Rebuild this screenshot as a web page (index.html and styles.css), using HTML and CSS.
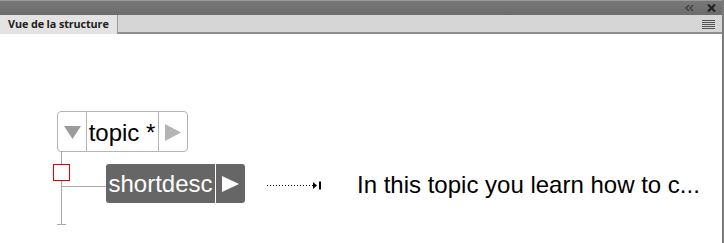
FILE: index.html
```html
<!DOCTYPE html>
<html>
<head>
<meta charset="utf-8">
<link rel="stylesheet" href="styles.css">
</head>
<body>
<div class="panel">
  <div class="titlebar">
    <span class="tb-collapse">
      <svg width="9" height="6" viewBox="0 0 9 6"><path d="M4 0 L1 3 L4 6 M8 0 L5 3 L8 6" fill="none" stroke="#3a3a3a" stroke-width="1.3"/></svg>
    </span>
    <span class="tb-close">
      <svg width="9" height="8" viewBox="0 0 9 8"><path d="M1 0.5 L8 7.5 M8 0.5 L1 7.5" stroke="#222" stroke-width="2.2"/></svg>
    </span>
  </div>
  <div class="tabbar">
    <div class="tab">Vue de la structure</div>
    <div class="tab-spacer"></div>
    <div class="menu-icon">
      <svg width="13" height="9" viewBox="0 0 13 9"><path d="M0 0.5H13M0 2.5H13M0 4.5H13M0 6.5H13M0 8.5H13" stroke="#555" stroke-width="1"/></svg>
    </div>
  </div>
  <div class="content">
    <div class="diagram">
      <div class="node topic">
        <div class="cell arrow-cell">
          <svg width="17" height="13" viewBox="0 0 17 13"><path d="M0 0H17L8.5 13Z" fill="#9c9c9c"/></svg>
        </div>
        <div class="cell label">topic *</div>
        <div class="cell arrow-cell right">
          <svg width="16" height="17" viewBox="0 0 16 17"><path d="M0 0L16 8.5L0 17Z" fill="#b4b4b4"/></svg>
        </div>
      </div>
      <div class="row">
        <div class="connector">
          <div class="vline"></div>
          <div class="tick"></div>
          <div class="hline"></div>
          <div class="redbox"></div>
        </div>
        <div class="node shortdesc">
          <div class="cell label">shortdesc</div>
          <div class="cell arrow-cell">
            <svg width="17" height="16" viewBox="0 0 17 16"><path d="M0 0L17 8L0 16Z" fill="#ffffff"/></svg>
          </div>
        </div>
        <div class="link">
          <svg width="54" height="9" viewBox="0 0 54 9"><path d="M0 4.5H46" stroke="#000" stroke-width="1" stroke-dasharray="1 2"/><path d="M46 1L50 4.5L46 8Z" fill="#000"/><rect x="52" y="0.5" width="2" height="8" fill="#000"/></svg>
        </div>
        <div class="desc">In this topic you learn how to c...</div>
      </div>
    </div>
  </div>
</div>
</body>
</html>
```
FILE: styles.css
```css
html, body {
  margin: 0;
  padding: 0;
  background: #ffffff;
}
.panel {
  width: 722px;
  height: 243px;
  border-right: 2px solid #7a7a7a;
  display: flex;
  flex-direction: column;
  font-family: "Liberation Sans", Arial, sans-serif;
}
.titlebar {
  height: 14px;
  border-top: 1px solid #9a9a9a;
  background: linear-gradient(#777777, #6c6c6c);
  display: flex;
  justify-content: flex-end;
  align-items: center;
  padding-right: 6px;
}
.tb-collapse {
  display: flex;
  margin-right: 13px;
}
.tb-close {
  display: flex;
}
.tabbar {
  height: 17px;
  background: #d6d6d6;
  border-bottom: 2px solid #8e8e8e;
  display: flex;
  align-items: stretch;
}
.tab {
  width: 109px;
  padding-left: 8px;
  background: #e3e3e3;
  border-right: 1px solid #9a9a9a;
  margin-bottom: -2px;
  font-family: "Open Sans", "DejaVu Sans", sans-serif;
  font-weight: bold;
  font-size: 10.8px;
  line-height: 18px;
  color: #222222;
  letter-spacing: -0.1px;
}
.tab-spacer {
  flex: 1;
}
.menu-icon {
  display: flex;
  align-items: center;
  padding-right: 7px;
  padding-top: 2px;
}
.content {
  flex: 1;
  background: #ffffff;
  position: relative;
}
.diagram {
  padding-top: 77px;
  padding-left: 57px;
}
.node {
  display: flex;
  box-sizing: border-box;
}
.topic {
  width: 131px;
  height: 41px;
  border: 1px solid #b4b4b4;
  border-radius: 4px;
}
.cell {
  display: flex;
  align-items: center;
  justify-content: center;
}
.topic .arrow-cell {
  width: 28px;
  border-right: 1px solid #b4b4b4;
}
.topic .arrow-cell.right {
  width: 27px;
  border-right: none;
}
.topic .label {
  width: 72px;
  border-right: 1px solid #b4b4b4;
  font-size: 24px;
  color: #000000;
  padding-top: 2px;
  padding-right: 1px;
  box-sizing: border-box;
}
.topic .arrow-cell svg {
  margin-top: 1px;
}
.row {
  display: flex;
  align-items: flex-start;
  margin-top: 12px;
}
.connector {
  position: relative;
  width: 49px;
  height: 61px;
}
.vline {
  position: absolute;
  left: 4px;
  top: -13px;
  width: 1px;
  height: 73px;
  background: #aaaaaa;
}
.tick {
  position: absolute;
  left: 0;
  top: 60px;
  width: 9px;
  height: 1px;
  background: #aaaaaa;
}
.hline {
  position: absolute;
  left: 4px;
  top: 22px;
  width: 45px;
  height: 1px;
  background: #aaaaaa;
}
.redbox {
  position: absolute;
  left: -4px;
  top: 0;
  width: 15px;
  height: 15px;
  border: 1px solid #e00000;
  background: #ffffff;
}
.shortdesc {
  width: 139px;
  height: 39px;
  background: #666666;
  border-radius: 3px;
}
.shortdesc .label {
  width: 110px;
  border-right: 1px solid #ffffff;
  color: #ffffff;
  font-size: 24px;
  padding-top: 1px;
  box-sizing: border-box;
}
.shortdesc .arrow-cell {
  width: 28px;
}
.link {
  display: flex;
  margin-left: 22px;
  margin-top: 17px;
}
.desc {
  margin-left: 36px;
  margin-top: 7px;
  font-size: 24px;
  color: #000000;
  white-space: nowrap;
}
```
